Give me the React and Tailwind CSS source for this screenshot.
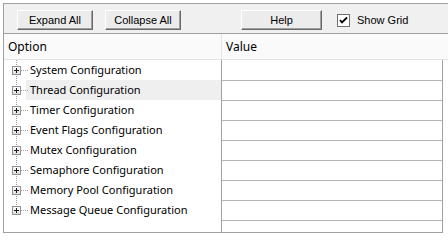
import React from "react";

const items = [
  "System Configuration",
  "Thread Configuration",
  "Timer Configuration",
  "Event Flags Configuration",
  "Mutex Configuration",
  "Semaphore Configuration",
  "Memory Pool Configuration",
  "Message Queue Configuration",
];

function Btn({ children, w }) {
  return (
    <button
      className={`${w} h-[20px] bg-[#ececec] border border-t-white border-l-white border-r-[#696969] border-b-[#696969] shadow-[inset_-1px_-1px_0_#a0a0a0] text-[11px] text-black font-['Liberation_Sans',sans-serif] leading-none flex items-center justify-center`}
    >
      {children}
    </button>
  );
}

function Expander({ last }) {
  return (
    <svg width="14" height="20" overflow="visible" className="shrink-0 block relative z-10">
      <defs>
        <linearGradient id="eg" x1="0" y1="0" x2="0" y2="1">
          <stop offset="0" stopColor="#ffffff" />
          <stop offset="1" stopColor="#dcdcdc" />
        </linearGradient>
      </defs>
      <line x1="4.5" y1="0" x2="4.5" y2={last ? 10 : 20} stroke="#a0a0a0" strokeDasharray="1 1" />
      <line x1="9" y1="10.5" x2="16" y2="10.5" stroke="#a0a0a0" strokeDasharray="1 1" />
      <rect x="0.5" y="6.5" width="8" height="8" fill="url(#eg)" stroke="#919191" />
      <line x1="2" y1="10.5" x2="7" y2="10.5" stroke="#1e1e1e" />
      <line x1="4.5" y1="8" x2="4.5" y2="13" stroke="#1e1e1e" />
    </svg>
  );
}

export default function App() {
  const font = "font-['Noto_Sans',sans-serif]";
  return (
    <div className="w-[448px] h-[245px] bg-white pt-[3px] pl-[3px] overflow-hidden">
      <div className="border-l border-t border-[#a0a0a0] w-[460px]">
        {/* toolbar */}
        <div className="h-[30px] bg-[#f0f0f0] border-b border-[#a0a0a0] flex items-start pt-[6px] pl-[13px]">
          <Btn w="w-[76px]">Expand All</Btn>
          <div className="w-[12px]" />
          <Btn w="w-[76px]">Collapse All</Btn>
          <div className="w-[60px]" />
          <Btn w="w-[81px]">Help</Btn>
          <div className="ml-[15px] mt-[4px] flex items-center">
            <div className="w-[13px] h-[13px] bg-white border border-[#707070] flex items-center justify-center">
              <svg width="9" height="9" viewBox="0 0 9 9">
                <path d="M1 4 L3 6.5 L8 1.5" fill="none" stroke="#000" strokeWidth="1.8" />
              </svg>
            </div>
            <span className="ml-[7px] text-[11px] font-['Liberation_Sans',sans-serif] text-black leading-none">Show Grid</span>
          </div>
        </div>
        {/* header */}
        <div className={`h-[26px] flex bg-[#fafafa] border-b border-[#e3e3e3] text-[12px] text-black ${font}`}>
          <div className="w-[218px] border-r border-[#e3e3e3] flex items-center pl-[4px]">Option</div>
          <div className="flex items-center pl-[4px]">Value</div>
        </div>
        {/* body */}
        <div className="flex">
          <div className={`w-[217px] h-[173px] border-b border-[#a0a0a0] text-[11px] text-black ${font}`}>
            {items.map((t, i) => (
              <div key={t} className="h-[20px] flex items-center pl-[8px]">
                <Expander last={i === items.length - 1} />
                <div
                  className={`h-[20px] flex-1 flex items-center pl-[4px] ${i === 1 ? "bg-[#efefef]" : ""}`}
                >
                  {t}
                </div>
              </div>
            ))}
          </div>
          <div className="w-[222px] h-[173px] border-l border-r border-b border-[#a0a0a0]">
            {Array.from({ length: 9 }).map((_, i) => (
              <div
                key={i}
                className={`${i === 0 ? "h-[20px]" : i === 8 ? "h-[12px] border-t border-[#b4b4b4]" : "h-[20px] border-t border-[#b4b4b4]"}`}
              />
            ))}
          </div>
        </div>
      </div>
    </div>
  );
}
